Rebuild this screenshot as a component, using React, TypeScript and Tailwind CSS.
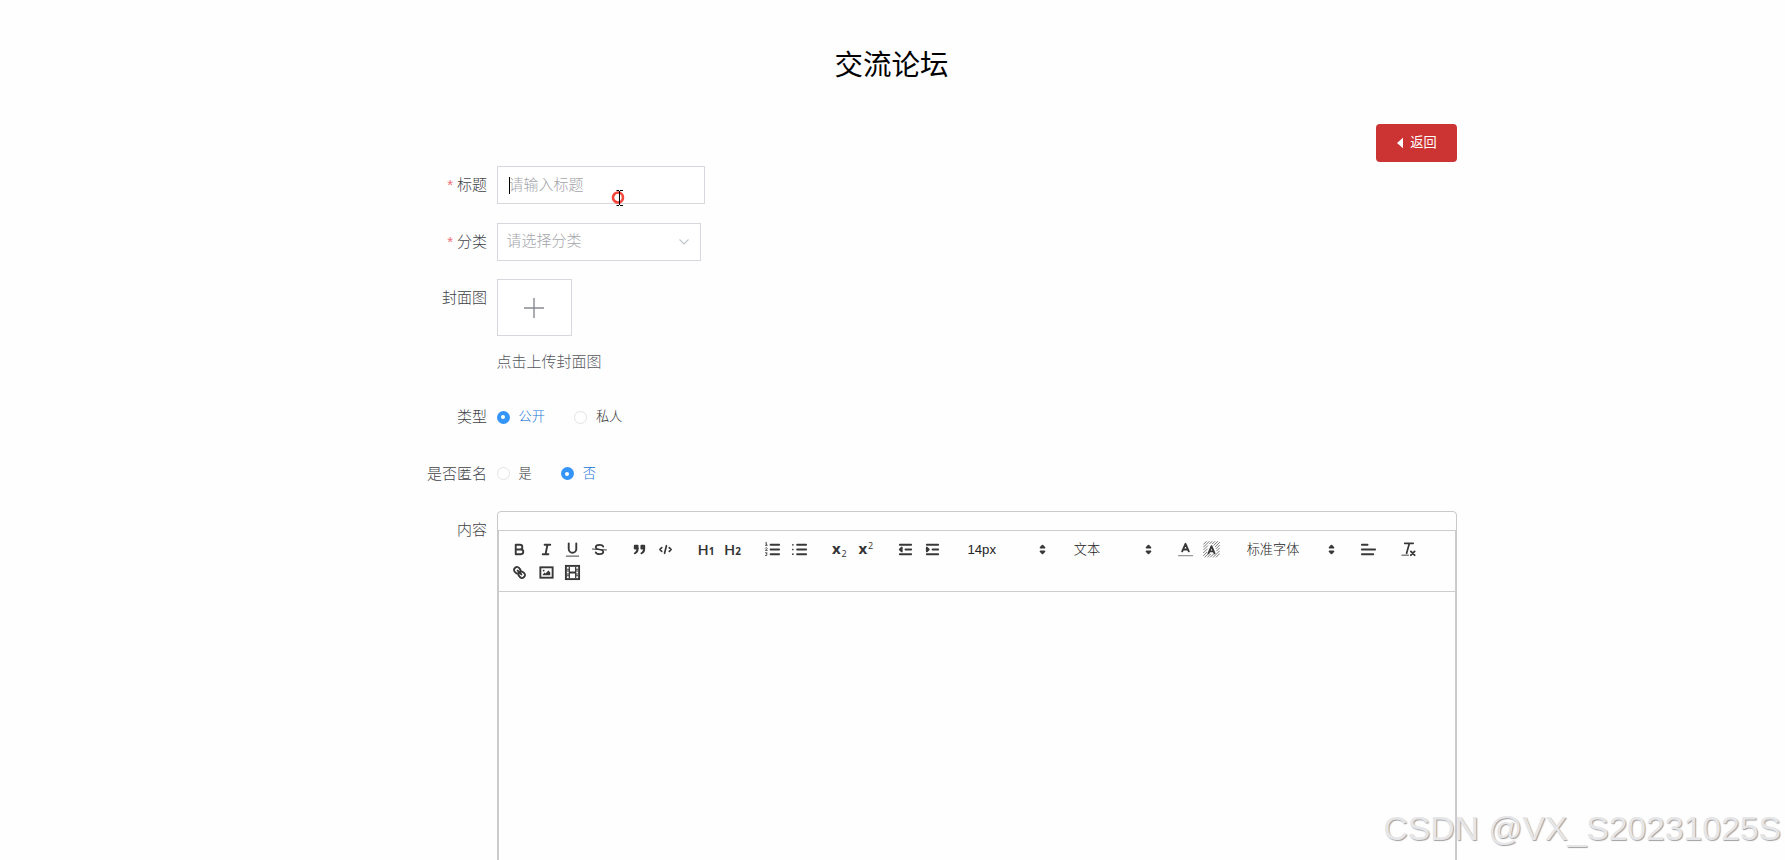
import type { ReactNode } from 'react'

const FONT = "font-['Liberation_Sans','Noto_Sans_CJK_SC',sans-serif]"

function Icon({ children }: { children: ReactNode }) {
  return (
    <svg
      viewBox="0 0 18 18"
      className="w-[17px] h-[17px] shrink-0"
      fill="none"
      stroke="#383838"
      strokeWidth={2}
      strokeLinecap="round"
      strokeLinejoin="round"
    >
      {children}
    </svg>
  )
}

function ToolButton({ label, children }: { label: string; children: ReactNode }) {
  return (
    <button type="button" aria-label={label} className="flex items-center justify-center w-[26.5px] h-[22.7px]">
      <Icon>{children}</Icon>
    </button>
  )
}

function Group({ children }: { children: ReactNode }) {
  return <div className="flex mr-[13.7px]">{children}</div>
}

function Picker({ label, width }: { label: string; width: string }) {
  return (
    <div className={`flex items-center justify-between h-[22.7px] pl-[8px] pr-[1px] text-[13.2px] text-[#222] ${width}`}>
      <span>{label}</span>
      <Icon>
        <path fill="#383838" d="M7 11L9 13L11 11Z M7 7L9 5L11 7Z" />
      </Icon>
    </div>
  )
}

interface FormRowProps {
  label: string
  required?: boolean
  height?: string
  children: ReactNode
}

function FormRow({ label, required, height = 'h-[38px]', children }: FormRowProps) {
  return (
    <div className={`flex mb-[18.7px] ${height}`}>
      <div className="w-[169px] pr-[9.5px] shrink-0 text-right text-[15px] leading-[38px] text-[#404246]">
        {required && <span className="mr-1 text-[15px] text-[#f0707a]">*</span>}
        {label}
      </div>
      {children}
    </div>
  )
}

function Radio({ label, checked }: { label: string; checked?: boolean }) {
  return (
    <label className="flex items-center mr-[29px] h-[38px]">
      <span
        className={`flex items-center justify-center w-[13px] h-[13px] rounded-full ${
          checked ? 'bg-[#3494f8]' : 'border border-[#e2e3e8] bg-white'
        }`}
      >
        {checked && <span className="w-1 h-1 rounded-full bg-white"></span>}
      </span>
      <span className={`ml-[9px] text-[13.2px] ${checked ? 'text-[#1673d8]' : 'text-[#333]'}`}>{label}</span>
    </label>
  )
}

function Toolbar() {
  return (
    <div className="flex flex-wrap h-[62px] pl-[7.8px] pt-[7px] border-y border-[#ccc] content-start">
      <Group>
        <ToolButton label="bold">
          <path d="M5 4H9.5A2.5 2.5 0 0 1 9.5 9H5ZM5 9H10.5A2.5 2.5 0 0 1 10.5 14H5Z" />
        </ToolButton>
        <ToolButton label="italic">
          <path d="M7 4H13M5 14H11M8 14L10 4" />
        </ToolButton>
        <ToolButton label="underline">
          <path d="M5 2.500V8.500a4 4 0 0 0 8 0V2.500" />
          <path strokeWidth={1} d="M2.500 16H15.500" />
        </ToolButton>
        <ToolButton label="strike">
          <path d="M13 6C12.5 4.800 11 4 9 4C6.700 4 5 5.100 5 6.500C5 8 6.500 8.700 9 9C11.500 9.300 13 10 13 11.500C13 12.900 11.300 14 9 14C7 14 5.500 13.200 5 12" strokeWidth={1.8} />
          <path strokeWidth={1} d="M1.500 8.500L16.500 9.500" />
        </ToolButton>
      </Group>
      <Group>
        <ToolButton label="blockquote">
          <rect x="4" y="5" width="3" height="3" fill="#383838" />
          <rect x="11" y="5" width="3" height="3" fill="#383838" />
          <path fill="#383838" d="M7 8c0 4.031-3 5-3 5M14 8c0 4.031-3 5-3 5" />
        </ToolButton>
        <ToolButton label="code">
          <path d="M5 7L3 9L5 11M13 7L15 9L13 11M10 5L8 13" strokeWidth={1.8} />
        </ToolButton>
      </Group>
      <Group>
        {['1', '2'].map((n) => (
          <button key={n} type="button" className="w-[26.5px] h-[22.7px] flex items-baseline justify-center font-['Open_Sans',sans-serif] text-[#333] leading-[22px]">
            <span className="text-[15px] font-semibold">H</span>
            <span className="text-[10px] font-bold">{n}</span>
          </button>
        ))}
      </Group>
      <Group>
        <ToolButton label="ordered list">
          <path d="M7 4H16M7 9H16M7 14H16" />
          <path strokeWidth={0.9} d="M1.500 4.500H3.500M2.500 4.500V1.500L1.800 1.900M1.500 7.500C2 6.700 3.500 7 3.400 7.900L1.500 10H3.500M1.500 12.500H3.300L2.500 14C4 14.200 3.500 15.800 1.500 15.400" />
        </ToolButton>
        <ToolButton label="bullet list">
          <path d="M6.500 4H16M6.500 9H16M6.500 14H16" />
          <path strokeWidth={1.8} d="M2 4H2M2 9H2M2 14H2" />
        </ToolButton>
      </Group>
      <Group>
        <button type="button" className="w-[26.5px] h-[22.7px] flex items-center justify-center font-['Open_Sans',sans-serif] text-[#333]">
          <span className="text-[15px] font-bold leading-none mb-[2px]">x</span>
          <span className="text-[9px] font-normal leading-none mt-[8px] ml-px">2</span>
        </button>
        <button type="button" className="w-[26.5px] h-[22.7px] flex items-center justify-center font-['Open_Sans',sans-serif] text-[#333]">
          <span className="text-[15px] font-bold leading-none mb-[2px]">x</span>
          <span className="text-[9px] font-normal leading-none mb-[8px] ml-px">2</span>
        </button>
      </Group>
      <Group>
        <ToolButton label="outdent">
          <path d="M3 14H15M3 4H15M9 9H15" />
          <path fill="#383838" d="M5 7V11L3 9Z" />
        </ToolButton>
        <ToolButton label="indent">
          <path d="M3 14H15M3 4H15M9 9H15" />
          <path fill="#383838" d="M3 7V11L5 9Z" />
        </ToolButton>
      </Group>
      <Group>
        <Picker label="14px" width="w-[92.6px]" />
      </Group>
      <Group>
        <Picker label="文本" width="w-[92.6px]" />
      </Group>
      <Group>
        <ToolButton label="text color">
          <path d="M5.500 11L9 3L12.500 11M6.400 9H11.600" />
          <path stroke="#999" strokeWidth={1.2} d="M1.500 15.500H16.500" />
        </ToolButton>
        <ToolButton label="background color">
          <path
            strokeWidth={0.7}
            d="M.5 3.500L3.500 .5M.5 6.500L6.500 .5M.5 9.500L5 5M.5 12.500L4.500 8.500M.5 15.500L4 12M2 17L6 13M5 17L8 14M8 17L11 14M11 17L17.500 10.500M14 17L17.500 13.500M7 3L9.500 .5M10 3L12.500 .5M11.500 4.500L15.500 .5M13 6L17.500 1.500M14 8L17.500 4.500M14.500 10.500L17.500 7.500"
          />
          <path d="M5.800 13L9 5.500L12.200 13M6.800 11H11.200" />
        </ToolButton>
      </Group>
      <Group>
        <Picker label="标准字体" width="w-[102px]" />
      </Group>
      <Group>
        <div className="ml-px">
          <ToolButton label="align">
            <path d="M2 9H16M2 14H14M2 4H8" />
          </ToolButton>
        </div>
      </Group>
      <Group>
        <ToolButton label="clean">
          <path d="M5 2.500H14M7 13L9.800 3" strokeWidth={1.8} />
          <path d="M11.500 11L15.500 15M15.500 11L11.500 15" />
          <path strokeWidth={1} d="M2 15H9" />
        </ToolButton>
      </Group>
      <div className="flex w-full">
        <ToolButton label="link">
          <path d="M7 7L11 11" />
          <path d="M8.900 4.577a3.476 3.476 0 0 1 .36 4.679A3.476 3.476 0 0 1 4.577 8.900C3.185 7.500 2.035 6.400 4.217 4.217S7.500 3.185 8.900 4.577Z" />
          <path d="M13.423 9.100a3.476 3.476 0 0 0-4.679-.36a3.476 3.476 0 0 0 .36 4.679c1.392 1.392 2.500 2.542 4.679.36S14.815 10.500 13.423 9.100Z" />
        </ToolButton>
        <ToolButton label="image">
          <rect x="2.500" y="3.500" width="13" height="11" strokeLinejoin="miter" />
          <circle cx="6" cy="7" r="1" fill="#383838" stroke="none" />
          <path fill="#383838" stroke="none" d="M5 12V11L7 9L8 10L11 7L13 9V12Z" />
        </ToolButton>
        <ToolButton label="video">
          <rect x="2" y="2" width="14" height="14" strokeLinejoin="miter" />
          <path
            fill="#383838"
            stroke="none"
            d="M5 3h1.300v12H5ZM11.700 3h1.300v12h-1.300ZM5 8h8v2H5ZM3 5h3v1H3ZM3 7h3v1H3ZM3 10h3v1H3ZM3 12h3v1H3ZM12 5h3v1h-3ZM12 7h3v1h-3ZM12 10h3v1h-3ZM12 12h3v1h-3Z"
          />
        </ToolButton>
      </div>
    </div>
  )
}

export default function App() {
  return (
    <div className={`relative w-full h-[860px] overflow-hidden bg-[#fefefe] font-light ${FONT}`}>
      <div className="w-[1130px] mx-auto">
        <h1 className="pt-[44px] h-[124px] pr-[2px] text-center text-[28.5px] leading-[42px] font-normal text-black">交流论坛</h1>

        <div className="flex justify-end h-[42px] pr-px">
          <button type="button" className="flex items-center justify-center w-[81px] h-[38px] pl-[2px] rounded-[4px] bg-[#cc3333] text-[13.2px] font-normal text-white">
            <svg viewBox="0 0 7 12" className="w-[6px] h-[12px] mr-[7px]" fill="#fff">
              <path d="M7 0V12L0 6Z" />
            </svg>
            返回
          </button>
        </div>

        {/* Form */}
        <FormRow label="标题" required>
          <div className="relative flex items-center w-[208px] h-[38px] pl-[11px] border border-[#d6d8dd] bg-white text-[15px] text-[#a4a5aa]">
            <span className="absolute left-[11px] top-[10px] w-px h-[17px] bg-black"></span>
            请输入标题
            {/* mouse pointer */}
            <svg viewBox="0 0 14 16" className="absolute left-[113px] top-[23px] w-[14px] h-[16px]" fill="none">
              <circle cx="7" cy="7.500" r="5" stroke="#f5473c" strokeWidth={2.6} />
              <path d="M5.500 .5H8M9 .5H12M8.500 1V15M5.500 15.500H8M9 15.500H12" stroke="#000" strokeWidth={1} />
            </svg>
          </div>
        </FormRow>
        <FormRow label="分类" required>
          <div className="flex items-center justify-between w-[204px] h-[38px] pl-[9px] pr-[11px] border border-[#d6d8dd] bg-white text-[15px] text-[#a4a5aa]">
            请选择分类
            <svg viewBox="0 0 10 6" className="w-[10px] h-[6px]" fill="none" stroke="#c0c4cc" strokeWidth={1.1}>
              <path d="M.5 .5L5 5L9.500 .5" />
            </svg>
          </div>
        </FormRow>
        <FormRow label="封面图" height="h-[100px]">
          <div>
            <div className="flex items-center justify-center w-[75px] h-[57px] border border-[#d6d8dd] bg-white">
              <svg viewBox="0 0 20 20" className="w-[20px] h-[20px]" stroke="#888a92" strokeWidth={1.4}>
                <path d="M10 0V20M0 10H20" />
              </svg>
            </div>
            <p className="mt-[7px] text-[15px] leading-[38px] text-[#56585e]">点击上传封面图</p>
          </div>
        </FormRow>
        <FormRow label="类型">
          <Radio label="公开" checked />
          <Radio label="私人" />
        </FormRow>
        <FormRow label="是否匿名">
          <Radio label="是" />
          <Radio label="否" checked />
        </FormRow>
        <FormRow label="内容" height="h-[500px]">
          <div className="w-[960px] h-full rounded-[4px] border border-[#c8c9cc] pt-[18px]">
            <div className="h-full border-x border-[#ccc]">
              <Toolbar />
            </div>
          </div>
        </FormRow>
      </div>

      <div className="absolute right-[4px] bottom-[12px] text-[33.7px] leading-[40px] whitespace-nowrap text-[#e6e6e8] [text-shadow:1px_1px_1px_#a0a0a0]">
        CSDN @VX_S20231025S
      </div>
    </div>
  )
}
